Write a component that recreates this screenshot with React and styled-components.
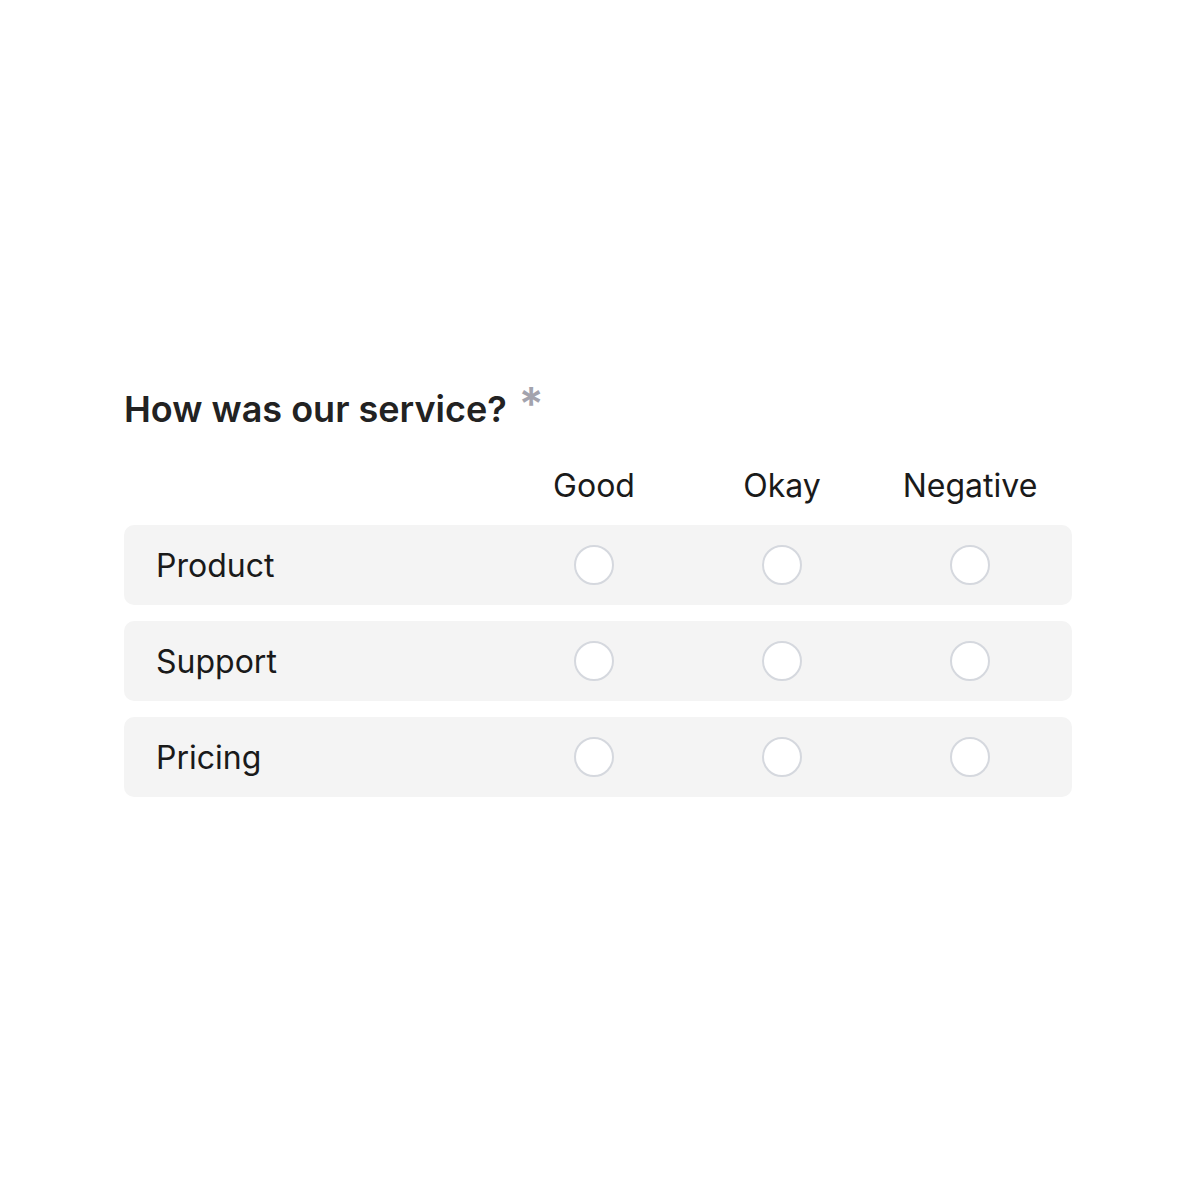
import React from 'react';
import styled, { createGlobalStyle } from 'styled-components';

const GlobalStyle = createGlobalStyle`
  html, body {
    margin: 0;
    padding: 0;
    background: #ffffff;
    font-family: Inter, "Noto Sans", sans-serif;
    color: #1a1a1a;
  }
`;

const Page = styled.div`
  width: 1200px;
  height: 1200px;
  display: flex;
  flex-direction: column;
  padding: 387px 128px 0 124px;
  box-sizing: border-box;
`;

const Question = styled.h2`
  margin: 0 0 35px;
  font-size: 36px;
  font-weight: 600;
  color: #222222;
  display: flex;
  align-items: flex-start;
  gap: 12px;
`;

const Required = styled.span`
  color: #a3a3ad;
  font-size: 46px;
  font-weight: 600;
  line-height: 1;
  margin-top: -6px;
`;

const Grid = styled.div`
  display: flex;
  flex-direction: column;
  gap: 16px;
`;

const HeaderRow = styled.div`
  display: grid;
  grid-template-columns: 1fr repeat(3, 188px);
  padding-right: 8px;
  margin-bottom: 3px;
`;

const ColumnLabel = styled.div`
  text-align: center;
  font-size: 32px;
  line-height: 40px;
  color: #1a1a1a;
`;

const Row = styled.div`
  display: grid;
  grid-template-columns: 1fr repeat(3, 188px);
  align-items: center;
  height: 80px;
  padding: 0 8px 0 32px;
  background: #f4f4f4;
  border-radius: 10px;
`;

const RowLabel = styled.div`
  font-size: 32px;
  color: #1a1a1a;
`;

const Cell = styled.div`
  display: flex;
  justify-content: center;
`;

const Radio = styled.span`
  width: 40px;
  height: 40px;
  box-sizing: border-box;
  border-radius: 50%;
  border: 2px solid #d5d8de;
  background: #ffffff;
`;

const columns = ['Good', 'Okay', 'Negative'];
const rows = ['Product', 'Support', 'Pricing'];

export default function App() {
  return (
    <>
      <GlobalStyle />
      <Page>
        <Question>
          How was our service?
          <Required>*</Required>
        </Question>
        <Grid>
          <HeaderRow>
            <div />
            {columns.map((c) => (
              <ColumnLabel key={c}>{c}</ColumnLabel>
            ))}
          </HeaderRow>
          {rows.map((r) => (
            <Row key={r}>
              <RowLabel>{r}</RowLabel>
              {columns.map((c) => (
                <Cell key={c}>
                  <Radio />
                </Cell>
              ))}
            </Row>
          ))}
        </Grid>
      </Page>
    </>
  );
}
